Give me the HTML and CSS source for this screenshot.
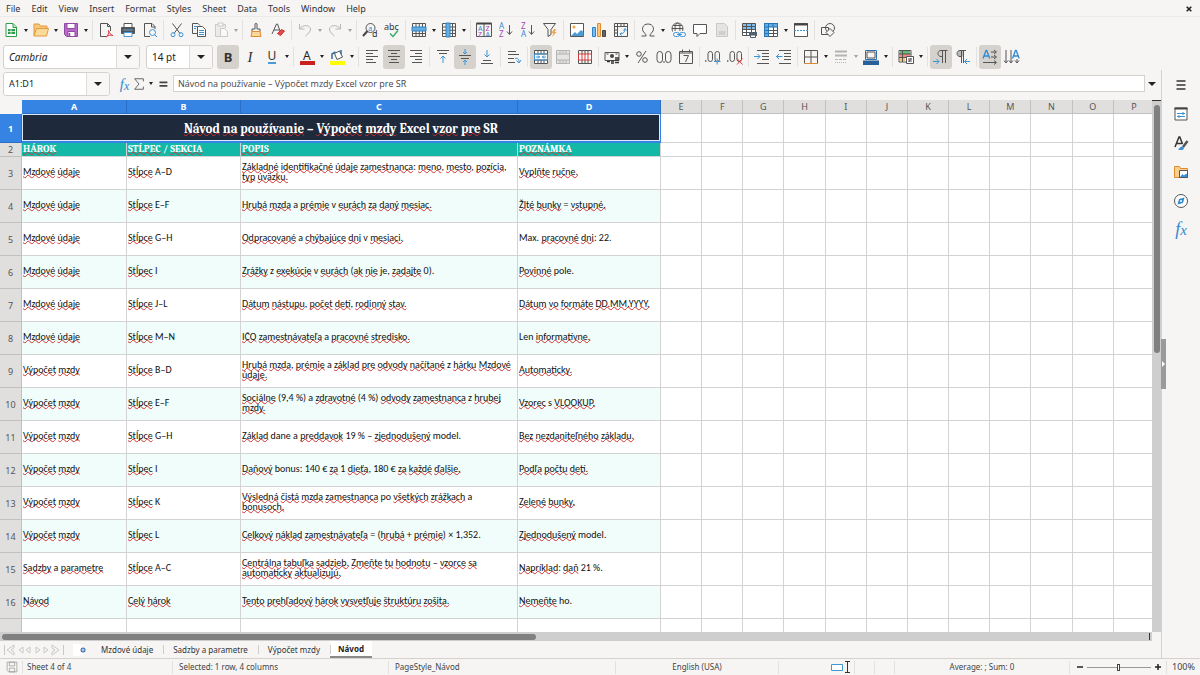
FILE: index.html
```html
<!DOCTYPE html>
<html lang="sk">
<head>
<meta charset="utf-8">
<title>Návod</title>
<link rel="stylesheet" href="styles.css">
</head>
<body>
<nav class="menubar">
<button>File</button><button>Edit</button><button>View</button><button>Insert</button><button>Format</button><button>Styles</button><button>Sheet</button><button>Data</button><button>Tools</button><button>Window</button><button>Help</button>
<button class="close" aria-label="Close"><svg width="6" height="6" viewBox="0 0 6 6"><path d="M.7.7l4.6 4.6M5.3.7L.7 5.3" stroke="#222" stroke-width="1.6"/></svg></button>
</nav>

<div class="toolbar standard">
<button class="tool" aria-label="New"><svg viewBox="0 0 16 16"><path d="M3 1.500h7l3.500 3.500v9.500H3z" fill="#fff" stroke="#2f9e4a"/><path d="M10 1.500v4h3.500" fill="#bde5c5" stroke="#2f9e4a"/><path d="M5 7h7v5H5z" fill="#2f9e4a"/><path d="M5 9.500h7M8 7v5" stroke="#fff" stroke-width=".7"/></svg></button><button class="drop" aria-label="New options"></button>
<button class="tool" aria-label="Open"><svg viewBox="0 0 16 16"><path d="M1 14V2h5l1.500 2H14v3" fill="#f7c87c" stroke="#e29a3a"/><path d="M1 14L3.500 6.500h12L13.500 14z" fill="#fbd999" stroke="#e29a3a"/></svg></button><button class="drop" aria-label="Open options"></button>
<button class="tool" aria-label="Save"><svg viewBox="0 0 16 16"><path d="M1.500 1.500h13v13h-11l-2-2z" fill="#b66bc7" stroke="#9149a3"/><path d="M4 1.500h8v5H4zM5 9.500h7v5H5z" fill="#fff" stroke="#9149a3"/><path d="M6.500 11v3" stroke="#9149a3" stroke-width="1.500"/></svg></button><button class="drop" aria-label="Save options"></button>
<i class="sep"></i>
<button class="tool" aria-label="Export as PDF"><svg viewBox="0 0 16 16"><path d="M9 14.500H2.500v-13h7l3 3V9M9.500 1.500v3h3" class="k"/><path d="M8 15c2-1 3-4 2.500-6.500C12 12 13 13 15 13.500 12 12.500 10 13.500 8 15z" fill="none" stroke="#d83a4a"/></svg></button>
<button class="tool" aria-label="Print"><svg viewBox="0 0 16 16"><path d="M4 5V1.500h8V5" fill="#fff" class="ks"/><rect x="1" y="5" width="14" height="7" rx="1" fill="#555"/><path d="M3 8h10" stroke="#5aa7e0"/><path d="M4 10.500h8v4H4z" fill="#fff" stroke="#4c9bd8"/></svg></button>
<button class="tool" aria-label="Print preview"><svg viewBox="0 0 16 16"><path d="M13 7V4.500l-3-3H2.500v13H8M9.500 1.500v3.500H13" class="k"/><circle cx="10.500" cy="10.500" r="3" class="b"/><path d="M12.500 12.500L15 15" class="b"/></svg></button>
<i class="sep"></i>
<button class="tool" aria-label="Cut"><svg viewBox="0 0 16 16"><path d="M3.500 1.500l7.500 10M12.500 1.500l-7.500 10" class="k"/><circle cx="4" cy="12.700" r="2" class="b"/><circle cx="12" cy="12.700" r="2" class="b"/></svg></button>
<button class="tool" aria-label="Copy"><svg viewBox="0 0 16 16"><path d="M6 11.500H1.500v-10H7l2 2" class="k"/><path d="M6.500 4.500h5l3 3v7h-8z" fill="#fff" class="ks"/><path d="M3 4.500h3M3 6.500h2M8 8.500h5M8 10.500h5M8 12.500h5" class="b"/></svg></button>
<button class="tool off" aria-label="Paste"><svg viewBox="0 0 16 16"><path d="M7 14.500H2.500v-12h10V6" fill="#ddd" stroke="#888"/><path d="M5 1h5v3H5zM7.500 6.500h4l3 3v5h-7z" fill="#fff" stroke="#888"/></svg></button><button class="drop off" aria-label="Paste options"></button>
<i class="sep"></i>
<button class="tool" aria-label="Clone formatting"><svg viewBox="0 0 16 16"><path d="M7 7V2c0-1 2-1 2 0v5h3v2.500H4V7z" class="k"/><path d="M4 9.500L3 14.500h10l-1-5z" fill="#fbd999" stroke="#e08a30"/></svg></button>
<button class="tool" aria-label="Clear formatting"><svg viewBox="0 0 16 16"><path d="M2 12L6.500 2h1L10 9M4 8h5" class="k"/><path d="M7.500 11.500l4-4 3 1.500-4 4.500z" fill="#e34a4a" stroke="#c83232"/></svg></button>
<i class="sep"></i>
<button class="tool off" aria-label="Undo"><svg viewBox="0 0 16 16"><path d="M2.500 2v5h5M2.500 7C6 2 13 3 13.500 7c.3 3-3 5-5 7" class="k"/></svg></button><button class="drop off" aria-label="Undo list"></button>
<button class="tool off" aria-label="Redo"><svg viewBox="0 0 16 16"><path d="M13.500 2v5h-5M13.500 7C10 2 3 3 2.500 7c-.3 3 3 5 5 7" class="k"/></svg></button><button class="drop off" aria-label="Redo list"></button>
<i class="sep"></i>
<button class="tool" aria-label="Find and replace"><svg viewBox="0 0 16 16"><circle cx="8.500" cy="6" r="4.500" class="k"/><path d="M5.500 9L1 14" class="k2"/><text x="6.300" y="8.500" font-size="7" fill="#2f8bd0">a</text><text x="10" y="15" font-size="9" fill="#333">d</text></svg></button>
<button class="tool" aria-label="Spelling"><svg viewBox="0 0 16 16"><text x="0" y="7.500" font-size="9" fill="#333">abc</text><path d="M6 11.500l3 3 5-6" fill="none" stroke="#2fa866" stroke-width="1.300"/></svg></button>
<i class="sep"></i>
<button class="tool" aria-label="Row"><svg viewBox="0 0 16 16"><path d="M1.500 1.500h13v13h-13zM5 1.500v13M8.300 1.500v13M11.500 1.500v13M1.500 11.500h13" class="k"/><path d="M1 5h14v4H1z" fill="#64aee4" stroke="#2f82c4"/></svg></button><button class="drop" aria-label="Row options"></button>
<button class="tool" aria-label="Column"><svg viewBox="0 0 16 16"><path d="M1.500 1.500h13v13h-13zM1.500 5h13M1.500 8.300h13M1.500 11.500h13M11.500 1.500v13" class="k"/><path d="M5 1h4v14H5z" fill="#64aee4" stroke="#2f82c4"/></svg></button><button class="drop" aria-label="Column options"></button>
<i class="sep"></i>
<button class="tool" aria-label="Sort"><svg viewBox="0 0 16 16"><path d="M.5 1.500h15v13H.5zM8 1.500v13" class="k"/><path d="M.5 1.500h15" class="k2"/><text x="2" y="8.500" font-size="7" fill="#2f8bd0">A</text><text x="2" y="14.500" font-size="7" fill="#a347b5">Z</text><text x="9.500" y="8.500" font-size="7" fill="#a347b5">Z</text><text x="9.500" y="14.500" font-size="7" fill="#2f8bd0">A</text></svg></button>
<button class="tool" aria-label="Sort ascending"><svg viewBox="0 0 16 16"><text x="1" y="7" font-size="8" fill="#2f8bd0">A</text><text x="1" y="15" font-size="8" fill="#a347b5">Z</text><path d="M11.500 3v9M9 9.500l2.500 3 2.500-3" class="k"/></svg></button>
<button class="tool" aria-label="Sort descending"><svg viewBox="0 0 16 16"><text x="1" y="7" font-size="8" fill="#a347b5">Z</text><text x="1" y="15" font-size="8" fill="#2f8bd0">A</text><path d="M11.500 3v9M9 9.500l2.500 3 2.500-3" class="k"/></svg></button>
<button class="tool" aria-label="AutoFilter"><svg viewBox="0 0 16 16"><path d="M1.500 1.500h12L9 7.500v5l-3 2v-7z" class="k"/><path d="M12 7L9.500 11h2L10 15l4.500-5h-2L14 7z" fill="#f3a340"/></svg></button>
<i class="sep"></i>
<button class="tool" aria-label="Image"><svg viewBox="0 0 16 16"><path d="M1.500 1.500h13v13h-13z" fill="#fff" class="ks"/><path d="M2 14l4-4 2 2 4-4 2.500 2v4z" fill="#4a9bd8"/><circle cx="5" cy="5" r="1.500" fill="#f3a340"/></svg></button>
<button class="tool" aria-label="Chart"><svg viewBox="0 0 16 16"><path d="M1.500 5.500h3v9h-3z" fill="#7dbcec" stroke="#2f82c4"/><path d="M6.500 1.500h3v13h-3z" fill="#fbc878" stroke="#e08a30"/><path d="M11.500 8.500h3v6h-3z" fill="#666" stroke="#444"/></svg></button>
<button class="tool" aria-label="Pivot table"><svg viewBox="0 0 16 16"><path d="M1.500 1.500h13v13h-13zM1.500 4.500h13M4.500 1.500v13M8 1.500v3M11 1.500v3M1.500 8h3M1.500 11h3" class="k"/><path d="M7 12c3 0 5-2 5-5M10.500 8.500L12 6.500l1.500 2M8.500 10.500L7 12l1.500 1.500" class="b"/></svg></button>
<i class="sep"></i>
<button class="tool" aria-label="Special character"><svg viewBox="0 0 16 16"><path d="M1.500 14H6v-1.500C0 8 2.500 2 8 2s8 6 2 10.500V14h4.500" class="k"/></svg></button><button class="drop" aria-label="Recent characters"></button>
<button class="tool" aria-label="Hyperlink"><svg viewBox="0 0 16 16"><circle cx="7.500" cy="6.500" r="5.500" class="k"/><ellipse cx="7.500" cy="6.500" rx="2.500" ry="5.500" class="k"/><path d="M2 6.500h11M3 3.500h9M3 9.500h9" class="k"/><rect x="3" y="9" width="13" height="7" fill="#f6f5f4"/><rect x="3.500" y="10.500" width="6" height="4" rx="2" class="b"/><rect x="9.500" y="10.500" width="6" height="4" rx="2" class="b"/><path d="M7 12.500h5" class="b"/></svg></button>
<button class="tool" aria-label="Comment"><svg viewBox="0 0 16 16"><path d="M1.500 2.500h13v9H8l-3 3v-3H1.500z" fill="#fff" class="ks"/></svg></button>
<button class="tool off" aria-label="Header and footer"><svg viewBox="0 0 16 16"><path d="M2.500 1.500h8l3 3v10h-11z" fill="#ccc" stroke="#888"/><path d="M4.500 9h7v4h-7z" fill="#999"/></svg></button>
<i class="sep"></i>
<button class="tool" aria-label="Print area"><svg viewBox="0 0 16 16"><path d="M1.500 1.500h13v12h-13z" fill="#fff" class="ks"/><path d="M2 2h12v5H2z" fill="#7dbcec"/><path d="M1.500 4.500h13M1.500 7.500h13M1.500 10.500h13M5.500 1.500v12M10.500 1.500v12" class="k"/><rect x="8" y="10" width="8" height="4" fill="#4f6070"/><path d="M9.500 13h5v2.500h-5z" fill="#fff" stroke="#4f6070"/></svg></button>
<button class="tool" aria-label="Freeze"><svg viewBox="0 0 16 16"><path d="M1.500 1.500h13v13h-13z" fill="#fff" class="ks"/><path d="M10.500 5v10M6 8.500h9M6 11.500h9" class="k"/><path d="M1.500 1.500h13V5H5.500v9.500h-4z" fill="#64aee4" stroke="#2774b5"/><path d="M5.500 1.500v4M10 1.500v4M1.500 8.500h4M1.500 11.500h4M1.500 5h4" stroke="#2774b5"/></svg></button><button class="drop" aria-label="Freeze options"></button>
<button class="tool" aria-label="Split window"><svg viewBox="0 0 16 16"><path d="M1.500 1.500h13v13h-13z" fill="#fff" class="ks"/><path d="M1 2.500h14" class="k2"/><path d="M1 8.500h14" class="b" stroke-dasharray="2 1"/></svg></button>
<i class="sep"></i>
<button class="tool" aria-label="Draw functions"><svg viewBox="0 0 16 16"><circle cx="10" cy="6" r="4.500" class="k"/><path d="M1.500 5.500h7v7h-7z" class="k"/><path d="M10 6.500l4 4-4 4-4-4z" fill="#f6f5f4" class="ks"/></svg></button>
</div>

<div class="toolbar format">
<div class="combo font"><input value="Cambria" aria-label="Font name"><button aria-label="Font list"></button></div>
<div class="combo size"><input value="14 pt" aria-label="Font size"><button aria-label="Size list"></button></div>
<button class="tool on" aria-label="Bold"><b class="glyph">B</b></button>
<button class="tool" aria-label="Italic"><em class="glyph serif">I</em></button>
<button class="tool" aria-label="Underline"><span class="glyph under">U</span></button><button class="drop" aria-label="Underline options"></button>
<i class="sep"></i>
<button class="tool" aria-label="Font color"><svg viewBox="0 0 16 16"><text x="4" y="10.500" font-size="12" fill="#222">A</text><path d="M1 12h15v4H1z" fill="#c9211e"/></svg></button><button class="drop" aria-label="Font color options"></button>
<button class="tool" aria-label="Highlighting"><svg viewBox="0 0 16 16"><path d="M5.500 4.500l5-2.500 3 6-5.500 2.500z" fill="#fff" class="ks"/><path d="M3 10V5l3.500-2M12 1v4" fill="none" stroke="#2f6f9f" stroke-width="1.500"/><path d="M1 12h15v4H1z" fill="#ffff00"/></svg></button><button class="drop" aria-label="Highlighting options"></button>
<i class="sep"></i>
<button class="tool" aria-label="Align left"><svg viewBox="0 0 16 16"><path d="M2 1.500h12M2 4.500h7M2 7.500h12M2 10.500h7M2 13.500h10" class="k"/></svg></button>
<button class="tool on" aria-label="Align center"><svg viewBox="0 0 16 16"><path d="M2 1.500h12M5 4.500h6M2 7.500h12M5 10.500h6M3 13.500h10" class="k"/></svg></button>
<button class="tool" aria-label="Align right"><svg viewBox="0 0 16 16"><path d="M2 1.500h12M7 4.500h7M2 7.500h12M7 10.500h7M4 13.500h10" class="k"/></svg></button>
<i class="sep"></i>
<button class="tool" aria-label="Align top"><svg viewBox="0 0 16 16"><path d="M2 1.500h12M4 4.500h8" class="k"/><path d="M8 14V7M5.500 9.500L8 7l2.500 2.500" class="b"/></svg></button>
<button class="tool on" aria-label="Center vertically"><svg viewBox="0 0 16 16"><path d="M2 6.500h12M4 9.500h8" class="k"/><path d="M8 0v5M6 3l2 2 2-2M8 16v-5M6 13l2-2 2 2" class="b"/></svg></button>
<button class="tool" aria-label="Align bottom"><svg viewBox="0 0 16 16"><path d="M4 11.500h8M2 14.500h12" class="k"/><path d="M8 1v7M5.500 5.500L8 8l2.500-2.500" class="b"/></svg></button>
<i class="sep"></i>
<button class="tool" aria-label="Wrap text"><svg viewBox="0 0 16 16"><path d="M2 2.500h8M2 5.500h11M2 9.500h6M2 13.500h7" class="k"/><path d="M9 9.500c3-1 4 1 4 4M10.500 11.500l2.500 2.500 2-3" class="b"/></svg></button>
<i class="sep"></i>
<button class="tool on" aria-label="Merge and center"><svg viewBox="0 0 16 16"><path d="M1.500 1.500h13v13h-13zM1.500 5h13M1.500 11h13M5 1.500V5M8 1.500V5M11 1.500V5M5 11v3.500M8 11v3.500M11 11v3.500" fill="#fff" class="ks"/><path d="M1.500 5h13v6h-13zM3 8h4M9 8h4M5 6.500L6.500 8 5 9.500M11 6.500L9.500 8l1.500 1.500" class="b"/></svg></button>
<button class="tool off" aria-label="Merge cells"><svg viewBox="0 0 16 16"><path d="M1.500 1.500h13v13h-13zM1.500 5h13M1.500 11h13M5 1.500V5M8 1.500V5M11 1.500V5M5 11v3.500M8 11v3.500M11 11v3.500" fill="#ccc" class="ks"/></svg></button>
<button class="tool" aria-label="Unmerge cells"><svg viewBox="0 0 16 16"><path d="M1.500 1.500h13v13h-13zM5 1.500V5M8 1.500V5M11 1.500V5M5 11v3.500M8 11v3.500M11 11v3.500" class="k"/><path d="M1.500 5h13v6h-13zM5 5v6M8 5v6M11 5v6" fill="#fff" stroke="#d83a3a"/></svg></button>
<i class="sep"></i>
<button class="tool" aria-label="Currency"><svg viewBox="0 0 16 16"><path d="M1 3.500h14v8H1z" class="k"/><circle cx="8" cy="7" r="2" fill="#444"/><path d="M2.500 5h2M11.500 5h2" class="k"/><path d="M3 12.500h3M7 12h3M11 11h4M7 14h3M11 13.500h4M11 9h4" stroke="#333" stroke-width="1.300"/></svg></button><button class="drop" aria-label="Currency options"></button>
<button class="tool" aria-label="Percent"><svg viewBox="0 0 16 16"><circle cx="5" cy="5" r="2.300" class="k"/><circle cx="11" cy="11" r="2.300" class="k"/><path d="M12 2L4 14" class="k"/></svg></button>
<button class="tool" aria-label="Number"><svg viewBox="0 0 16 16"><rect x="1" y="2.500" width="5.500" height="11" rx="2.700" class="k"/><rect x="9.500" y="2.500" width="5.500" height="11" rx="2.700" class="k"/><path d="M8 12v2" class="k"/></svg></button>
<button class="tool" aria-label="Date"><svg viewBox="0 0 16 16"><path d="M1.500 2.500h13v12h-13zM1.500 4h13M4.500.5v3M11.500.5v3M5.500 6.500h5L7.500 13" class="k"/></svg></button>
<i class="sep"></i>
<button class="tool" aria-label="Add decimal"><svg viewBox="0 0 16 16"><rect x="3" y="2.500" width="4.500" height="10" rx="2.200" class="k"/><rect x="10" y="2.500" width="4.500" height="10" rx="2.200" class="k"/><path d="M.8 11v2" class="k"/><path d="M9 12.500h6.500M12.200 9.500v6" class="b"/></svg></button>
<button class="tool" aria-label="Delete decimal"><svg viewBox="0 0 16 16"><rect x="3" y="2.500" width="4.500" height="10" rx="2.200" class="k"/><rect x="10" y="2.500" width="4.500" height="10" rx="2.200" class="k"/><path d="M.8 11v2" class="k"/><path d="M10 9.500l5.500 6M15.500 9.500l-5.500 6" stroke="#e03b3b"/></svg></button>
<i class="sep"></i>
<button class="tool" aria-label="Increase indent"><svg viewBox="0 0 16 16"><path d="M3 1.500h12M8 4.500h7M8 7.500h7M8 10.500h7M3 14.500h12" class="k"/><path d="M0 7.500h6M3.500 5L6 7.500 3.500 10" class="b"/></svg></button>
<button class="tool" aria-label="Decrease indent"><svg viewBox="0 0 16 16"><path d="M3 1.500h12M8 4.500h7M8 7.500h7M8 10.500h7M3 14.500h12" class="k"/><path d="M.5 7.500h6M3 5L.5 7.500 3 10" class="b"/></svg></button>
<i class="sep"></i>
<button class="tool" aria-label="Borders"><svg viewBox="0 0 16 16"><path d="M1.500 14.500v-13h13v13M8 1.500v13M1.500 8h13" class="k"/><path d="M1.500 14.500h13" stroke="#e08a30"/></svg></button><button class="drop" aria-label="Border options"></button>
<button class="tool off" aria-label="Border style"><svg viewBox="0 0 16 16"><path d="M2 2.500h12M2 6.500h12" stroke="#555" stroke-width="2"/><path d="M2 10.500h12" stroke="#555" stroke-dasharray="3 1"/><path d="M2 13.500h12" stroke="#555" stroke-dasharray="1 1"/></svg></button><button class="drop off" aria-label="Border style options"></button>
<button class="tool" aria-label="Border color"><svg viewBox="0 0 16 16"><path d="M2.500 1.500h11v9h-11z" fill="#f6f5f4" stroke="#2f6fae"/><path d="M4 3h8v6H4z" class="k"/><path d="M0 11.500h16V16H0z" fill="#2a6099"/></svg></button><button class="drop" aria-label="Border color options"></button>
<i class="sep"></i>
<button class="tool" aria-label="Conditional formatting"><svg viewBox="0 0 16 16"><path d="M1 1.500h12V13H1z" fill="#fff" class="ks"/><path d="M2 2h10v3H2z" fill="#66bb78"/><path d="M2 5h10v3H2z" fill="#ef8b80"/><path d="M2 8h5v4H2z" fill="#f5c177"/><path d="M1 5h12M1 8.500h12M4.500 2v11" class="k"/><path d="M8.500 7.500h7v7h-7z" fill="#fff" class="ks"/><path d="M10 10h4M10 12h4M13 9l-2 4" class="k"/></svg></button><button class="drop" aria-label="Conditional options"></button>
<i class="sep"></i>
<button class="tool on" aria-label="Left to right"><svg viewBox="0 0 16 16"><path d="M14.500 1.500H8c-4 0-4 6 0 6h1.500M9.500 1.500V14M12.500 1.500V14" class="k"/><path d="M0 12.500h6M3.500 10L6 12.500 3.500 15" class="b"/></svg></button>
<button class="tool" aria-label="Right to left"><svg viewBox="0 0 16 16"><path d="M8.500 1.500H5c-4 0-4 6 0 6h3.500z" fill="#bbb"/><path d="M11 1.500H5c-4 0-4 6 0 6h1.500M6.500 1.500V14M8.500 1.500V14" class="k"/><path d="M9.500 12.500H15M12 10l-2.500 2.500L12 15" class="b"/></svg></button>
<i class="sep"></i>
<button class="tool on" aria-label="Horizontal text"><svg viewBox="0 0 16 16"><path d="M1 9.500L4 1.500h.7l3 8M2 7h5" fill="none" stroke="#2f8bd0" stroke-width="1.300"/><path d="M9 3h5M12 1l2.500 2L12 5M9 8h5M12 6l2.500 2L12 10M1 13.500h13M12 11.500l2.500 2-2.500 2" class="k"/></svg></button>
<button class="tool" aria-label="Vertical text"><svg viewBox="0 0 16 16"><path d="M8.500 9.500L11.500 1.500h.7l3 8M10 7h4.500" fill="none" stroke="#2f8bd0" stroke-width="1.300"/><path d="M2 1v12M0 11.500L2 14l2-2.500M7 1v12M5 11.500L7 14l2-2.500M13 10v3M11 11.500l2 2.500 2-2.500" class="k"/></svg></button>
</div>

<div class="middle">
<main class="work">
<div class="formulabar">
<div class="combo name"><input value="A1:D1" aria-label="Name box"><button aria-label="Name list"></button></div>
<button class="fx" aria-label="Function wizard"><em>f</em><em class="sub">x</em></button>
<button class="tool small" aria-label="Select function"><svg viewBox="0 0 16 16"><path d="M13 5V2H3l5 6-5 6h10v-3" class="k"/></svg></button><button class="drop" aria-label="Function list"></button>
<button class="tool small" aria-label="Formula"><svg viewBox="0 0 16 16"><path d="M4 6h9M4 10h9" stroke="#444" stroke-width="2"/></svg></button>
<input class="formula" aria-label="Input line" value="Návod na používanie – Výpočet mzdy Excel vzor pre SR">
<button class="expand" aria-label="Expand formula bar"></button>
</div>
<div class="view">
<div class="sheet">
<table>
<colgroup><col class="ch"><col class="ca"><col class="cb"><col class="cc"><col class="cd"><col span="12"></colgroup>
<thead><tr><th class="corner"></th><th class="sel">A</th><th class="sel">B</th><th class="sel">C</th><th class="sel">D</th><th>E</th><th>F</th><th>G</th><th>H</th><th>I</th><th>J</th><th>K</th><th>L</th><th>M</th><th>N</th><th>O</th><th>P</th></tr></thead>
<tbody>
<tr class="title"><th class="sel">1<td colspan="4"><u>Návod</u> <u>na</u> <u>používanie</u> – <u>Výpočet</u> <u>mzdy</u> Excel <u>vzor</u> <u>pre</u> SR<td><td><td><td><td><td><td><td><td><td><td><td></tr>
<tr class="head"><th>2<td><u>HÁROK</u><td><u>STĹPEC</u> / <u>SEKCIA</u><td><u>POPIS</u><td><u>POZNÁMKA</u><td><td><td><td><td><td><td><td><td><td><td><td></tr>
<tr><th>3<td><u>Mzdové</u> <u>údaje</u><td><u>Stĺpce</u> A–D<td><u>Základné</u> <u>identifikačné</u> <u>údaje</u> <u>zamestnanca</u>: <u>meno</u>, <u>mesto</u>, <u>pozícia</u>,<br><u>typ</u> <u>úväzku.</u><td><u>Vyplňte</u> <u>ručne.</u><td><td><td><td><td><td><td><td><td><td><td><td></tr>
<tr><th>4<td><u>Mzdové</u> <u>údaje</u><td><u>Stĺpce</u> E–F<td><u>Hrubá</u> <u>mzda</u> a <u>prémie</u> v <u>eurách</u> <u>za</u> <u>daný</u> <u>mesiac.</u><td><u>Žlté</u> <u>bunky</u> = <u>vstupné.</u><td><td><td><td><td><td><td><td><td><td><td><td></tr>
<tr><th>5<td><u>Mzdové</u> <u>údaje</u><td><u>Stĺpce</u> G–H<td><u>Odpracované</u> a <u>chýbajúce</u> <u>dni</u> v <u>mesiaci.</u><td>Max. <u>pracovné</u> <u>dni</u>: 22.<td><td><td><td><td><td><td><td><td><td><td><td></tr>
<tr><th>6<td><u>Mzdové</u> <u>údaje</u><td><u>Stĺpec</u> I<td><u>Zrážky</u> z <u>exekúcie</u> v <u>eurách</u> (<u>ak</u> <u>nie</u> je, <u>zadajte</u> 0).<td><u>Povinné</u> pole.<td><td><td><td><td><td><td><td><td><td><td><td></tr>
<tr><th>7<td><u>Mzdové</u> <u>údaje</u><td><u>Stĺpce</u> J–L<td><u>Dátum</u> <u>nástupu</u>, <u>počet</u> <u>detí</u>, <u>rodinný</u> <u>stav.</u><td><u>Dátum</u> <u>vo</u> <u>formáte</u> <u>DD.MM.YYYY.</u><td><td><td><td><td><td><td><td><td><td><td><td></tr>
<tr><th>8<td><u>Mzdové</u> <u>údaje</u><td><u>Stĺpce</u> M–N<td><u>IČO</u> <u>zamestnávateľa</u> a <u>pracovné</u> <u>stredisko.</u><td>Len <u>informatívne.</u><td><td><td><td><td><td><td><td><td><td><td><td></tr>
<tr><th>9<td><u>Výpočet</u> <u>mzdy</u><td><u>Stĺpce</u> B–D<td><u>Hrubá</u> <u>mzda</u>, <u>prémie</u> a <u>základ</u> <u>pre</u> <u>odvody</u> <u>načítané</u> z <u>hárku</u> <u>Mzdové</u><br><u>údaje.</u><td><u>Automaticky.</u><td><td><td><td><td><td><td><td><td><td><td><td></tr>
<tr><th>10<td><u>Výpočet</u> <u>mzdy</u><td><u>Stĺpce</u> E–F<td><u>Sociálne</u> (9,4 %) a <u>zdravotné</u> (4 %) <u>odvody</u> <u>zamestnanca</u> z <u>hrubej</u><br><u>mzdy.</u><td><u>Vzorec</u> s <u>VLOOKUP.</u><td><td><td><td><td><td><td><td><td><td><td><td></tr>
<tr><th>11<td><u>Výpočet</u> <u>mzdy</u><td><u>Stĺpce</u> G–H<td><u>Základ</u> dane a <u>preddavok</u> 19 % – <u>zjednodušený</u> model.<td><u>Bez</u> <u>nezdaniteľného</u> <u>základu.</u><td><td><td><td><td><td><td><td><td><td><td><td></tr>
<tr><th>12<td><u>Výpočet</u> <u>mzdy</u><td><u>Stĺpec</u> I<td><u>Daňový</u> bonus: 140 € <u>za</u> 1 <u>dieťa</u>, 180 € <u>za</u> <u>každé</u> <u>ďalšie.</u><td><u>Podľa</u> <u>počtu</u> <u>detí.</u><td><td><td><td><td><td><td><td><td><td><td><td></tr>
<tr><th>13<td><u>Výpočet</u> <u>mzdy</u><td><u>Stĺpec</u> K<td><u>Výsledná</u> <u>čistá</u> <u>mzda</u> <u>zamestnanca</u> po <u>všetkých</u> <u>zrážkach</u> a<br><u>bonusoch.</u><td><u>Zelené</u> <u>bunky.</u><td><td><td><td><td><td><td><td><td><td><td><td></tr>
<tr><th>14<td><u>Výpočet</u> <u>mzdy</u><td><u>Stĺpec</u> L<td><u>Celkový</u> <u>náklad</u> <u>zamestnávateľa</u> = (<u>hrubá</u> + <u>prémie</u>) × 1,352.<td><u>Zjednodušený</u> model.<td><td><td><td><td><td><td><td><td><td><td><td></tr>
<tr><th>15<td><u>Sadzby</u> a <u>parametre</u><td><u>Stĺpce</u> A–C<td><u>Centrálna</u> <u>tabuľka</u> <u>sadzieb.</u> <u>Zmeňte</u> <u>tu</u> <u>hodnotu</u> – <u>vzorce</u> <u>sa</u><br><u>automaticky</u> <u>aktualizujú.</u><td><u>Napríklad</u>: <u>daň</u> 21 %.<td><td><td><td><td><td><td><td><td><td><td><td></tr>
<tr><th>16<td><u>Návod</u><td><u>Celý</u> <u>hárok</u><td><u>Tento</u> <u>prehľadový</u> <u>hárok</u> <u>vysvetľuje</u> <u>štruktúru</u> <u>zošita.</u><td><u>Nemeňte</u> ho.<td><td><td><td><td><td><td><td><td><td><td><td></tr>
<tr class="blank"><th><td><td><td><td><td><td><td><td><td><td><td><td><td><td><td><td></tr>
</tbody>
</table>
</div>
<div class="vscroll"><div class="thumb"></div></div>
</div>
<div class="hscroll"><div class="thumb"></div><div class="stop"></div></div>
<div class="tabs">
<button class="nav" aria-label="Sheet navigation"><svg width="62" height="12" viewBox="0 0 62 12" fill="none" stroke="#c9c8c6"><path d="M1.500 1v10M11 1L4 6l7 5V8L8 6l3-2zM20 3l-4 3 4 3zM27 3l-4 3 4 3zM33 3l4 3-4 3zM41 3l4 3-4 3zM49 1l7 5-7 5V8l3-2-3-2zM60.500 1v10"/></svg></button>
<button class="add" aria-label="Add sheet"><svg width="16" height="12" viewBox="0 0 16 12"><path d="M1 0h7l3 3v9H1z" fill="#fff"/><circle cx="11" cy="6" r="2.500" fill="#3d6fb0"/><path d="M9.500 6h3M11 4.500v3" stroke="#fff" stroke-width=".8"/></svg></button>
<button class="tab">Mzdové údaje</button><button class="tab">Sadzby a parametre</button><button class="tab">Výpočet mzdy</button><button class="tab current">Návod</button>
</div>
</main>
<aside class="sidebar">
<button class="deck" aria-label="Sidebar settings"><svg viewBox="0 0 16 16"><path d="M3.500 4h9M3.500 8h9M3.500 12h9" stroke="#333" stroke-width="1.400"/></svg></button>
<button class="deck" aria-label="Properties"><svg viewBox="0 0 16 16"><path d="M2 2h12v12H2z" fill="#fff" class="ks"/><path d="M1.500 2.500h13" class="k2"/><path d="M4 7.500h8M4 10.500h8M10 6v3M6 9v3" class="b"/></svg></button>
<button class="deck" aria-label="Styles"><svg viewBox="0 0 16 16"><path d="M2 12L6 2h.8L9.500 9M3.500 8.500h5" fill="none" stroke="#333" stroke-width="1.500"/><path d="M14.500 6L10 12" stroke="#555" stroke-width="2.500"/><path d="M5 14.500c3-3 4-4 6-2 0 3-3 3-6 2z" fill="#3b8fd4"/></svg></button>
<button class="deck" aria-label="Gallery"><svg viewBox="0 0 16 16"><path d="M1.500 13.500v-11h5l1 2h7v9z" fill="#fbd08a" stroke="#e08a30"/><path d="M6.500 6.500h8v7h-8z" fill="#fff" class="ks"/><path d="M7 13l2.500-3 1.500 1.500 2-2 1 1V13z" fill="#3b8fd4"/></svg></button>
<button class="deck" aria-label="Navigator"><svg viewBox="0 0 16 16"><circle cx="8" cy="8" r="6.500" fill="#fff" class="ks"/><path d="M11.500 4.500L10 10l-5.500 1.500L6 6z" fill="#2f8bd0"/><circle cx="8" cy="8" r="1" fill="#fff"/></svg></button>
<button class="deck" aria-label="Functions"><span class="bigfx"><em>f</em><em class="sub">x</em></span></button>
<i class="grip"></i>
</aside>
</div>

<footer class="status">
<span class="s-save"><svg width="12" height="12" viewBox="0 0 16 16"><path d="M1.500 1.500h13v13h-11l-2-2zM4.500 1.500h7v5h-7zM4.500 9.500h7v5h-7z" fill="none" stroke="#999"/></svg></span>
<span class="s-sheet">Sheet 4 of 4</span>
<span class="s-sel">Selected: 1 row, 4 columns</span>
<span class="s-page">PageStyle_Návod</span>
<span class="s-lang">English (USA)</span>
<span class="s-mode"><svg width="20" height="12" viewBox="0 0 20 12"><path d="M1.500 3.500h11v6h-11z" fill="#fff" stroke="#3f97d6"/><path d="M15 .5h5M17.500.5v11M15 11.500h5" stroke="#333"/></svg></span>
<span class="s-box"></span><span class="s-box"></span>
<span class="s-sum">Average: ; Sum: 0</span>
<span class="s-zoom"><button aria-label="Zoom out"><svg width="8" height="8" viewBox="0 0 8 8"><path d="M1 4h6" stroke="#222" stroke-width="1.500"/></svg></button><input type="range" min="0" max="100" value="49" aria-label="Zoom"><button aria-label="Zoom in"><svg width="8" height="8" viewBox="0 0 8 8"><path d="M1 4h6M4 1v6" stroke="#222" stroke-width="1.500"/></svg></button></span>
<span class="s-pct">100%</span>
</footer>
</body>
</html>
```
FILE: styles.css
```css
* { box-sizing: border-box; }
body {
  margin: 0;
  height: 100vh;
  display: flex;
  flex-direction: column;
  overflow: hidden;
  background: #f6f5f4;
  color: #333;
  font: 9px/12px "Noto Sans", "Open Sans", sans-serif;
}
button, input { font: inherit; color: inherit; margin: 0; }
button {
  border: 0;
  padding: 0;
  background: none;
  display: flex;
  align-items: center;
  justify-content: center;
  flex: none;
}
input { border: 0; outline: 0; min-width: 0; }
svg { display: block; flex: none; overflow: visible; }
.k { fill: none; stroke: #555; }
.ks { stroke: #555; }
.k2 { fill: none; stroke: #444; stroke-width: 2; }
.b { fill: none; stroke: #3b94d6; }

/* menu */
.menubar {
  display: flex;
  align-items: center;
  height: 17px;
  flex: none;
  gap: 11px;
  padding: 1px 8px 0 6px;
  border-bottom: 1px solid #ebeae8;
}
.menubar .close { margin-left: auto; }

/* toolbars */
.toolbar { display: flex; align-items: center; height: 27px; flex: none; }
.toolbar.standard { height: 26px; }
.toolbar.format { padding-left: 3px; }
.tool { width: 22px; height: 24px; border-radius: 3px; }
.tool svg { width: 16px; height: 16px; }
.tool.on { background: #d5d1cd; }
.off { opacity: .4; }
.small { width: 16px; }
.small svg { width: 14px; height: 14px; }
.drop { width: 8px; height: 24px; }
.drop::after, .combo button::after, .expand::after {
  content: "";
  border: 3px solid transparent;
  border-top: 3px solid #222;
  border-bottom: 0;
}
.drop::after { border-left-width: 2px; border-right-width: 2px; }
.combo button::after, .expand::after { border-width: 4px 4px 0; }
.sep { width: 1px; height: 20px; margin: 0 2px; background: #e3e1df; flex: none; }
.glyph { font-size: 13px; line-height: 16px; }
.glyph.serif { font-family: "Liberation Serif", serif; font-size: 15px; }
.glyph.under { font-size: 12px; line-height: 13px; border-bottom: 2px solid #4a9bd8; }

.combo {
  display: flex;
  height: 24px;
  border: 1px solid #d5d1cd;
  border-radius: 3px;
  background: #fff;
  overflow: hidden;
  flex: none;
}
.combo input { flex: 1; padding: 0 5px; background: none; color: #222; }
.combo button { width: 23px; border-left: 1px solid #dedbd8; background: #f8f7f6; }
.combo.font { width: 137px; margin-right: 6px; font-style: italic; font-size: 10px; }
.combo.size { width: 67px; margin-right: 4px; font-size: 10px; }
.combo.name { width: 107px; margin-right: 8px; }

/* central area */
.middle { display: flex; flex: 1; min-height: 0; }
.work { flex: 1; min-width: 0; display: flex; flex-direction: column; }
.formulabar { display: flex; align-items: center; height: 30px; flex: none; padding: 0 3px 3px 3px; }
.fx, .bigfx { color: #2f8bd0; font-family: "Liberation Serif", serif; font-size: 15px; }
.fx .sub, .bigfx .sub { font-size: 12px; padding-top: 4px; }
.fx { width: 13px; }
.bigfx { font-size: 18px; }
.bigfx .sub { font-size: 15px; }
.formula {
  flex: 1;
  height: 17px;
  margin-left: 2px;
  padding: 0 4px;
  border: 1px solid #d5d1cd;
  background: #fff;
  color: #444;
  font-family: "Open Sans", "Noto Sans", sans-serif;
}
.expand { width: 13px; height: 17px; }

.view { display: flex; flex: 1; min-height: 0; }
.sheet { flex: 1; min-width: 0; overflow: hidden; background: #fff; }
table { table-layout: fixed; width: calc(100% + 3px); border-collapse: separate; border-spacing: 0; }
.ch { width: 22px; }
.ca { width: 105px; }
.cb { width: 114px; }
.cc { width: 277px; }
.cd { width: 143px; }
th, td { padding: 0; height: 33px; border: 0 solid #d3d3d3; border-width: 0 1px 1px 0; white-space: nowrap; }
th { background: #e1dfdd; color: #555; font-weight: 400; line-height: 11px; border-color: #c3c1bf; }
thead th { height: 14px; }
thead .corner { background: #f6f5f4; border: 0; }
th.sel { background: #3584e4; color: #fff; font-weight: 700; border-color: #2a6fc4; }
td { padding: 0 0 3px 1px; font: 10px/10px Carlito, Lato, sans-serif; color: #111; }
tr:nth-child(even) td:nth-child(-n+5) { background: #f0fdfa; }
.title th, .title td { height: 29px; }
.title td[colspan] {
  padding: 2px 0 0;
  background: #1e293b;
  color: #fff;
  text-align: center;
  font: 700 13px/14px Caladea, "DejaVu Serif Condensed", "DejaVu Serif", serif;
  border: solid #3584e4;
  border-width: 0 1px 2px 0;
  box-shadow: inset 0 0 0 1px #dbe9fb;
}
.head th, .head td { height: 14px; line-height: 11px; }
tr.head td:nth-child(-n+5) {
  padding-bottom: 0;
  background: #14b8a6;
  color: #fff;
  font: 700 10px/11px Caladea, "DejaVu Serif Condensed", "DejaVu Serif", serif;
}
.blank th, .blank td { height: 14px; }
u { text-decoration: underline wavy #d0312d 1px; text-decoration-skip-ink: none; text-underline-offset: -1px; }

.vscroll { width: 9px; padding: 4px 1px 0 2px; border-top: 1px solid #333; background: #cecece; }
.vscroll .thumb { width: 6px; height: 47%; border-radius: 3px; background: #808080; }
.hscroll { display: flex; align-items: center; justify-content: space-between; height: 9px; margin-right: 9px; padding: 0 2px; background: #cecece; flex: none; }
.hscroll .thumb { width: 46.500%; height: 6px; border-radius: 3px; background: #808080; }
.hscroll .stop { width: 1px; height: 7px; background: #333; }

.tabs { display: flex; height: 17px; flex: none; font-size: 8px; }
.nav { width: 68px; }
.add { width: 23px; }
.tab { padding: 0 10px; position: relative; }
.tab + .tab::before { content: ""; position: absolute; left: 0; top: 4px; height: 9px; border-left: 1px solid #d0cecc; }
.tab.current { padding: 0 8px; background: #fff; font-weight: 700; border-bottom: 2px solid #8a8a8a; color: #222; }

.sidebar {
  position: relative;
  width: 39px;
  flex: none;
  border-left: 1px solid #d5d1cd;
  display: flex;
  flex-direction: column;
  align-items: center;
}
.deck { width: 29px; height: 29px; }
.deck svg { width: 16px; height: 16px; }
.grip { position: absolute; left: -1px; top: 269px; width: 5px; height: 50px; background: #9a9a9a; }
.grip::after { content: ""; position: absolute; left: 1px; top: 22px; border: 3px solid transparent; border-left-color: #fff; border-right: 0; }

.status { display: flex; align-items: center; height: 17px; flex: none; border-top: 1px solid #d5d1cd; color: #444; font-size: 8px; }
.status > span { display: flex; align-items: center; height: 13px; border-right: 1px solid #e3e1df; flex: none; }
.s-save { width: 23px; padding-left: 6px; }
.s-sheet { width: 150px; padding-left: 4px; }
.s-sel { width: 216px; padding-left: 6px; }
.s-page { width: 227px; padding-left: 6px; }
.s-lang { width: 163px; justify-content: center; }
.s-mode { width: 76px; padding-left: 51px; }
.s-box { width: 20px; }
.status > .s-sum { flex: 1; justify-content: center; }
.s-zoom { width: 97px; padding: 0 4px 0 6px; }
.s-pct { width: 33px; justify-content: center; }
.status > .s-pct { border: 0; font-size: 9px; }
.s-zoom input { flex: 1; height: 9px; margin: 0 3px; appearance: none; background: linear-gradient(#999, #999) center / 100% 1px no-repeat; }
.s-zoom input::-webkit-slider-thumb { appearance: none; width: 3px; height: 7px; border: 1px solid #444; background: #fff; }
```
